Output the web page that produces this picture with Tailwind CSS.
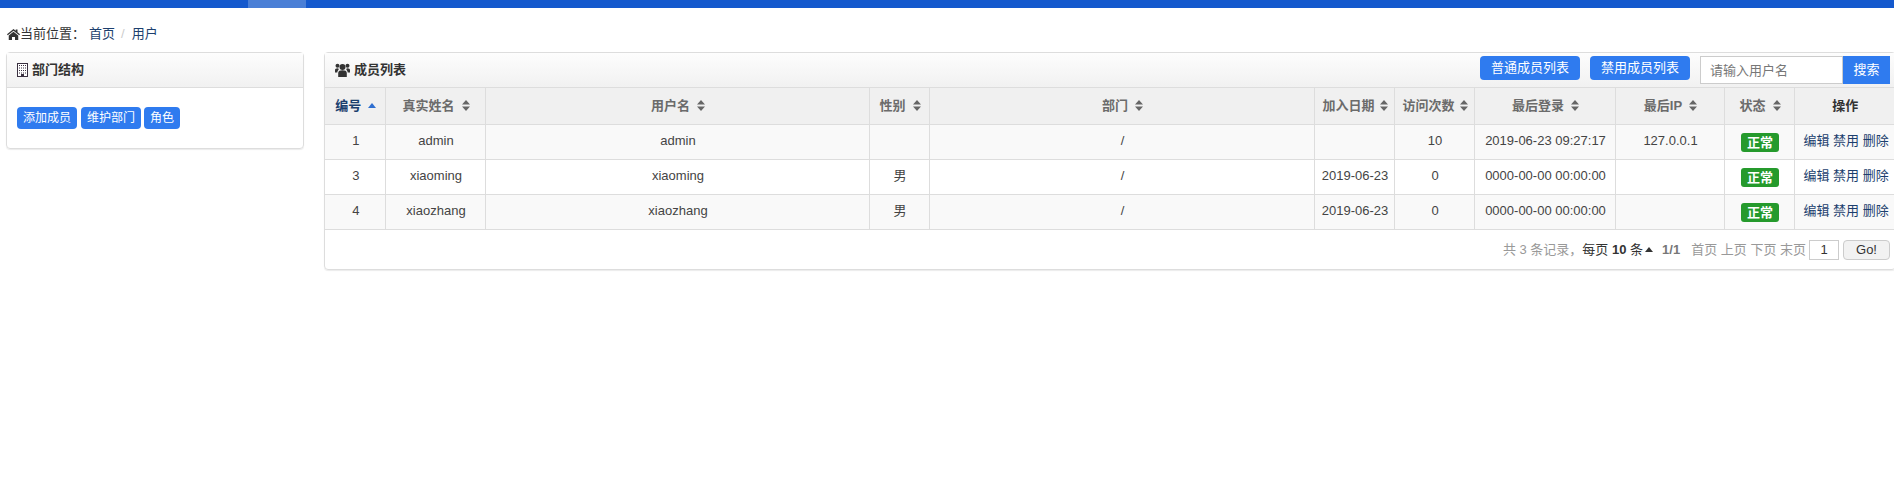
<!DOCTYPE html>
<html lang="zh">
<head>
<meta charset="utf-8">
<title>用户</title>
<script src="https://cdn.jsdelivr.net/npm/@tailwindcss/browser@4"></script>
</head>
<body class="bg-white h-[498px] w-[1894px] overflow-hidden text-[13px] leading-[18px] text-[#333] font-['Liberation_Sans','Noto_Sans_CJK_SC',sans-serif]">
<div class="h-2 bg-[#1459cd] pl-[248px]"><div class="h-2 w-[58px] bg-[#4a7fd6]"></div></div>
<nav class="flex items-center h-5 mt-4 pl-[7px] text-[13px]">
  <svg class="w-[13px] h-[11px] fill-[#333] shrink-0" viewBox="0 0 26 22"><path d="M13 0 0 10.500l1.500 2L13 3.500l11.500 9 1.500-2-5-4V1h-3.500v2.700z"/><path d="M3.500 13 13 5.500l9.500 7.500v9h-6.500v-6h-6v6H3.500z"/></svg>
  <span>当前位置：</span>
  <a class="ml-[4px] text-[#1c3f6e]">首页</a><span class="ml-[6px] text-[#ccc]">/</span><a class="ml-[7px] text-[#1c3f6e]">用户</a>
</nav>
<main class="flex items-start mt-[8px] pl-[6px] gap-[20px]">
  <section class="w-[298px] h-[97px] shrink-0 border border-[#ddd] rounded-[4px] shadow-[0_1px_1px_rgba(0,0,0,0.08)]">
    <header class="h-[35px] flex items-center pl-[10px] gap-[4px] border-b border-[#ddd] bg-gradient-to-b from-[#fdfdfd] to-[#f1f1f1] font-bold">
      <svg class="w-[11px] h-[14px]" viewBox="0 0 11 14"><rect x="0.500" y="0.500" width="10" height="13" fill="#fff" stroke="#3a3040"/><path d="M2 2.500h7M2 5h7M2 7.500h7M2 10h7" stroke="#3a3040" stroke-dasharray="1 1"/><rect x="4" y="11" width="3" height="3" fill="#3a3040"/></svg>
      <span>部门结构</span>
    </header>
    <div class="flex pl-[10px] pt-[19px]">
      <button class="h-[22px] w-[60px] bg-[#2f7bef] text-white text-[12px] rounded-[4px]">添加成员</button>
      <button class="h-[22px] w-[60px] ml-[4px] bg-[#2f7bef] text-white text-[12px] rounded-[4px]">维护部门</button>
      <button class="h-[22px] w-[36px] ml-[3px] bg-[#2f7bef] text-white text-[12px] rounded-[4px]">角色</button>
    </div>
  </section>
  <section class="w-[1572px] shrink-0 h-[218px] border border-[#ddd] rounded-[4px] shadow-[0_1px_1px_rgba(0,0,0,0.08)]">
    <header class="h-[35px] flex items-center pl-[10px] border-b border-[#ddd] bg-gradient-to-b from-[#fdfdfd] to-[#f1f1f1]">
      <svg class="w-[15px] h-[14px] fill-[#333] mr-[4px]" viewBox="0 0 15 14"><circle cx="7.500" cy="4" r="3"/><circle cx="2.500" cy="2.800" r="2"/><circle cx="12.500" cy="2.800" r="2"/><path d="M3.200 14V10C3.200 8 5 7.300 7.500 7.300S11.800 8 11.800 10v4zM0 9.500V7c0-1 1-1.800 2.500-1.800l1.200.5C4.200 6.800 2.300 7.300 2.300 9.500zM15 9.500V7c0-1-1-1.800-2.500-1.800l-1.200.5c-.5 1.100 1.400 1.600 1.400 3.800z"/></svg>
      <span class="font-bold">成员列表</span>
      <div class="ml-auto flex items-center mr-[5px]">
        <button class="h-6 w-[100px] bg-[#2f7bef] text-white rounded-[4px] mt-[-4px]">普通成员列表</button>
        <button class="h-6 w-[100px] ml-[10px] bg-[#2f7bef] text-white rounded-[4px] mt-[-4px]">禁用成员列表</button>
        <input class="h-[28px] w-[143px] ml-[10px] px-[9px] border border-[#ccc] bg-white text-[13px] placeholder:text-[#777]" placeholder="请输入用户名">
        <button class="h-[28px] w-[47px] bg-[#2f7bef] text-white">搜索</button>
      </div>
    </header>
    <table class="table-fixed border-collapse w-[1569px] text-center text-[13px] text-[#444]">
      <colgroup>
        <col class="w-[60px]"><col class="w-[100px]"><col class="w-[384px]"><col class="w-[60px]"><col class="w-[385px]"><col class="w-[80px]"><col class="w-[80px]"><col class="w-[141px]"><col class="w-[109px]"><col class="w-[70px]"><col class="w-[100px]">
      </colgroup>
      <thead class="bg-[#f0f0f0] text-[#6b6b6b] font-bold">
        <tr class="h-[36px] border-b border-[#ddd] [&>th]:pl-[2px]">
          <th class="border-r border-[#ddd] text-[#1c3f6e] font-bold"><span class="inline-flex items-center gap-[7px]">编号<svg class="w-2 h-[5px] fill-[#2f6fd0]" viewBox="0 0 8 5"><path d="M4 0l4 5H0z"/></svg></span></th>
          <th class="border-r border-[#ddd] font-bold"><span class="inline-flex items-center gap-[7px]">真实姓名<svg class="w-2 h-[11px] fill-[#666]" viewBox="0 0 8 11"><path d="M4 0l4 4.500H0zM4 11l4-4.500H0z"/></svg></span></th>
          <th class="border-r border-[#ddd] font-bold"><span class="inline-flex items-center gap-[7px]">用户名<svg class="w-2 h-[11px] fill-[#666]" viewBox="0 0 8 11"><path d="M4 0l4 4.500H0zM4 11l4-4.500H0z"/></svg></span></th>
          <th class="border-r border-[#ddd] font-bold"><span class="inline-flex items-center gap-[7px]">性别<svg class="w-2 h-[11px] fill-[#666]" viewBox="0 0 8 11"><path d="M4 0l4 4.500H0zM4 11l4-4.500H0z"/></svg></span></th>
          <th class="border-r border-[#ddd] font-bold"><span class="inline-flex items-center gap-[7px]">部门<svg class="w-2 h-[11px] fill-[#666]" viewBox="0 0 8 11"><path d="M4 0l4 4.500H0zM4 11l4-4.500H0z"/></svg></span></th>
          <th class="border-r border-[#ddd] font-bold"><span class="inline-flex items-center gap-[5px]">加入日期<svg class="w-2 h-[11px] fill-[#666]" viewBox="0 0 8 11"><path d="M4 0l4 4.500H0zM4 11l4-4.500H0z"/></svg></span></th>
          <th class="border-r border-[#ddd] font-bold"><span class="inline-flex items-center gap-[5px]">访问次数<svg class="w-2 h-[11px] fill-[#666]" viewBox="0 0 8 11"><path d="M4 0l4 4.500H0zM4 11l4-4.500H0z"/></svg></span></th>
          <th class="border-r border-[#ddd] font-bold"><span class="inline-flex items-center gap-[7px]">最后登录<svg class="w-2 h-[11px] fill-[#666]" viewBox="0 0 8 11"><path d="M4 0l4 4.500H0zM4 11l4-4.500H0z"/></svg></span></th>
          <th class="border-r border-[#ddd] font-bold"><span class="inline-flex items-center gap-[7px]">最后IP<svg class="w-2 h-[11px] fill-[#666]" viewBox="0 0 8 11"><path d="M4 0l4 4.500H0zM4 11l4-4.500H0z"/></svg></span></th>
          <th class="border-r border-[#ddd] font-bold"><span class="inline-flex items-center gap-[7px]">状态<svg class="w-2 h-[11px] fill-[#666]" viewBox="0 0 8 11"><path d="M4 0l4 4.500H0zM4 11l4-4.500H0z"/></svg></span></th>
          <th class="font-bold text-[#333]">操作</th>
        </tr>
      </thead>
      <tbody>
        <tr class="h-[35px] bg-[#f9f9f9] border-b border-[#ddd] [&>td]:pb-[2px] [&>td]:pl-[2px]">
          <td class="border-r border-[#ddd]">1</td><td class="border-r border-[#ddd]">admin</td><td class="border-r border-[#ddd]">admin</td><td class="border-r border-[#ddd]"></td><td class="border-r border-[#ddd]">/</td><td class="border-r border-[#ddd]"></td><td class="border-r border-[#ddd]">10</td><td class="border-r border-[#ddd]">2019-06-23 09:27:17</td><td class="border-r border-[#ddd]">127.0.0.1</td>
          <td class="border-r border-[#ddd]"><span class="inline-block w-[38px] h-[19px] translate-y-[2px] rounded-[3px] bg-[#259a2c] text-white font-bold text-[13px] leading-[19px] align-middle">正常</span></td>
          <td class="text-left !pl-[9px] text-[#1c3f6e] whitespace-nowrap">编辑 禁用 删除</td>
        </tr>
        <tr class="h-[35px] bg-white border-b border-[#ddd] [&>td]:pb-[2px] [&>td]:pl-[2px]">
          <td class="border-r border-[#ddd]">3</td><td class="border-r border-[#ddd]">xiaoming</td><td class="border-r border-[#ddd]">xiaoming</td><td class="border-r border-[#ddd]">男</td><td class="border-r border-[#ddd]">/</td><td class="border-r border-[#ddd]">2019-06-23</td><td class="border-r border-[#ddd]">0</td><td class="border-r border-[#ddd]">0000-00-00 00:00:00</td><td class="border-r border-[#ddd]"></td>
          <td class="border-r border-[#ddd]"><span class="inline-block w-[38px] h-[19px] translate-y-[2px] rounded-[3px] bg-[#259a2c] text-white font-bold text-[13px] leading-[19px] align-middle">正常</span></td>
          <td class="text-left !pl-[9px] text-[#1c3f6e] whitespace-nowrap">编辑 禁用 删除</td>
        </tr>
        <tr class="h-[35px] bg-[#f9f9f9] border-b border-[#ddd] [&>td]:pb-[2px] [&>td]:pl-[2px]">
          <td class="border-r border-[#ddd]">4</td><td class="border-r border-[#ddd]">xiaozhang</td><td class="border-r border-[#ddd]">xiaozhang</td><td class="border-r border-[#ddd]">男</td><td class="border-r border-[#ddd]">/</td><td class="border-r border-[#ddd]">2019-06-23</td><td class="border-r border-[#ddd]">0</td><td class="border-r border-[#ddd]">0000-00-00 00:00:00</td><td class="border-r border-[#ddd]"></td>
          <td class="border-r border-[#ddd]"><span class="inline-block w-[38px] h-[19px] translate-y-[2px] rounded-[3px] bg-[#259a2c] text-white font-bold text-[13px] leading-[19px] align-middle">正常</span></td>
          <td class="text-left !pl-[9px] text-[#1c3f6e] whitespace-nowrap">编辑 禁用 删除</td>
        </tr>
      </tbody>
    </table>
    <footer class="flex items-center justify-end h-[40px] pr-[5px] text-[13px] text-[#999] whitespace-pre">
      <span>共 3 条记录，</span><span class="text-[#333]">每页 <b>10</b> 条</span>
      <svg class="w-2 h-[5px] ml-[2px] fill-[#333]" viewBox="0 0 8 5"><path d="M4 0l4 5H0z"/></svg>
      <b class="ml-[9px] text-[#777]">1/1</b>
      <span class="ml-[11px]">首页 上页 下页 末页</span>
      <input value="1" class="ml-[3px] w-[30px] h-5 border border-[#ccc] text-center text-[#333] text-[13px]">
      <button class="ml-[4px] w-[47px] h-5 border border-[#ccc] rounded-[4px] bg-[#f2f2f2] text-[#333] text-[13px]">Go!</button>
    </footer>
  </section>
</main>
</body>
</html>
